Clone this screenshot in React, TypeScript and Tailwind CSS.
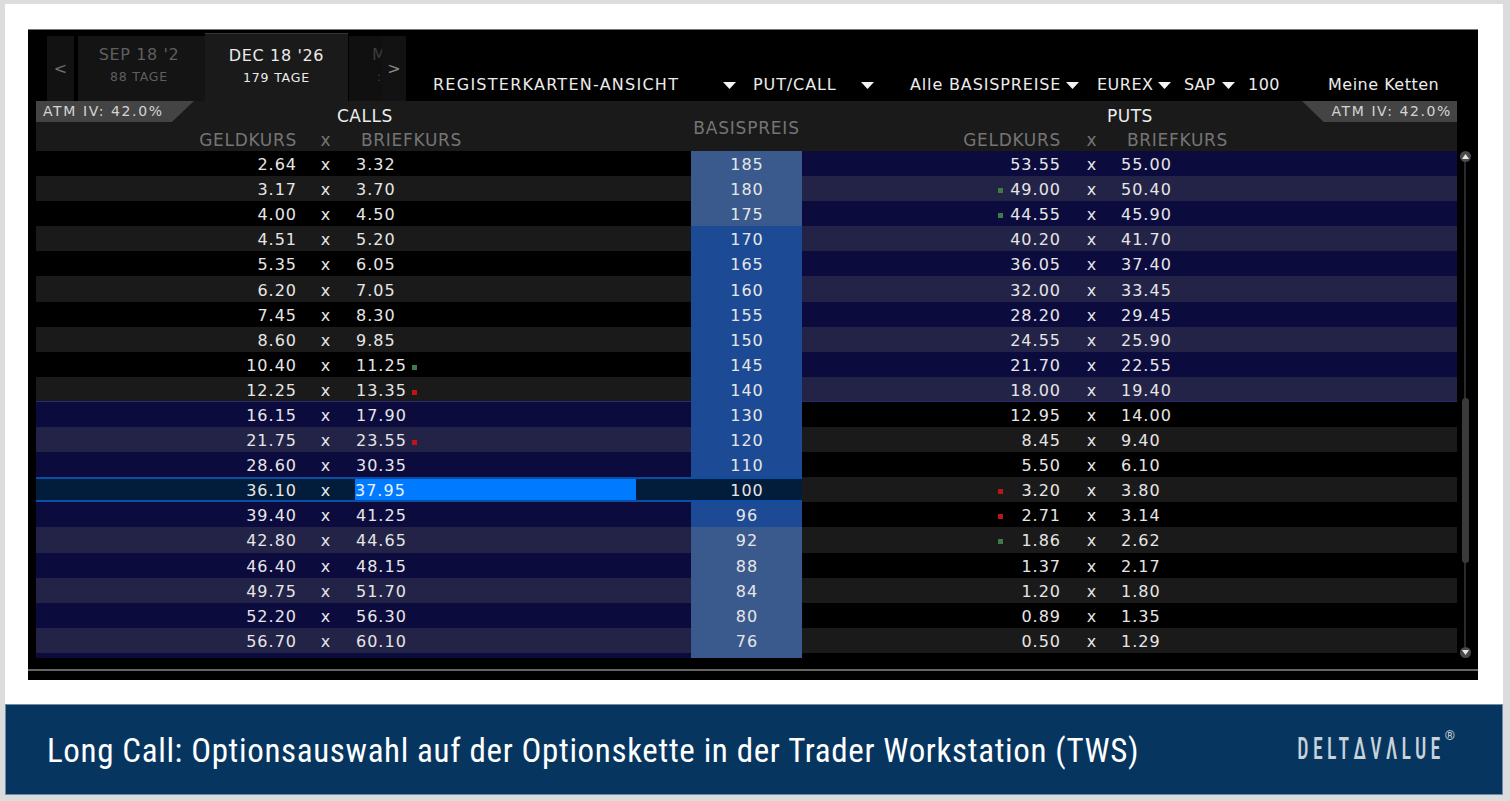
const rows: [string, string, string, string, string, string?, string?][] = [
  ["2.64", "3.32", "185", "53.55", "55.00"],
  ["3.17", "3.70", "180", "49.00", "50.40", "", "g"],
  ["4.00", "4.50", "175", "44.55", "45.90", "", "g"],
  ["4.51", "5.20", "170", "40.20", "41.70"],
  ["5.35", "6.05", "165", "36.05", "37.40"],
  ["6.20", "7.05", "160", "32.00", "33.45"],
  ["7.45", "8.30", "155", "28.20", "29.45"],
  ["8.60", "9.85", "150", "24.55", "25.90"],
  ["10.40", "11.25", "145", "21.70", "22.55", "g"],
  ["12.25", "13.35", "140", "18.00", "19.40", "r"],
  ["16.15", "17.90", "130", "12.95", "14.00"],
  ["21.75", "23.55", "120", "8.45", "9.40", "r"],
  ["28.60", "30.35", "110", "5.50", "6.10"],
  ["36.10", "37.95", "100", "3.20", "3.80", "", "r"],
  ["39.40", "41.25", "96", "2.71", "3.14", "", "r"],
  ["42.80", "44.65", "92", "1.86", "2.62", "", "g"],
  ["46.40", "48.15", "88", "1.37", "2.17"],
  ["49.75", "51.70", "84", "1.20", "1.80"],
  ["52.20", "56.30", "80", "0.89", "1.35"],
  ["56.70", "60.10", "76", "0.50", "1.29"],
];

function Dot({ c }: { c?: string }) {
  if (c === "g") return <span className="block w-[5px] h-[5px] mt-[3px] bg-[#3f7a48]" />;
  if (c === "r") return <span className="block w-[5px] h-[5px] mt-[3px] bg-[#c01414]" />;
  return <span className="block w-[5px] h-[5px]" />;
}

function Caret() {
  return (
    <svg width="13" height="7" viewBox="0 0 13 7" className="block">
      <path d="M0 0 H13 L6.5 7 Z" fill="#f4f4f4" />
    </svg>
  );
}

function CaretSlot({ w }: { w: string }) {
  return (
    <span className={`${w} shrink-0 h-[20px] flex items-center`}>
      <Caret />
    </span>
  );
}

function Row({ r, i }: { r: (typeof rows)[number]; i: number }) {
  const even = i % 2 === 0;
  const itm = i >= 10;
  const hl = i === 13;
  const lightStrike = i < 3 || i >= 15;
  const callBg = hl
    ? "bg-[#021c3b] border-y-2 border-[#0b4ea6]"
    : itm
      ? even
        ? "bg-[#0c0b3d]"
        : "bg-[#232247]"
      : even
        ? "bg-black"
        : "bg-[#1a1a1a]";
  const putBg = !itm
    ? even
      ? "bg-[#0c0b3d]"
      : "bg-[#232247]"
    : even
      ? "bg-black"
      : "bg-[#1a1a1a]";
  const strikeBg = hl
    ? "bg-[#021c3b] border-y-2 border-[#0b4ea6]"
    : lightStrike
      ? "bg-[#3a5a8e]"
      : "bg-[#1c4a94]";
  return (
    <div className="grid grid-cols-[655px_111px_655px] grid-rows-[25.1px] h-[25.1px] text-[#e6e6e6] text-[16px] leading-[20px] tracking-[1px]">
      <div className={`flex items-center min-w-0 min-h-0 ${callBg}`}>
        <span className="w-[261px] text-right pt-[3px]">{r[0]}</span>
        <span className="w-[56px] text-center pt-[3px] pl-[2px]">x</span>
        {hl ? (
          <span className="ml-[2px] w-[281px] h-full flex items-center pt-[3px] bg-[#007aff] text-[#e8f2ff]">{r[1]}</span>
        ) : (
          <span className="ml-[3px] pt-[3px] flex items-center gap-[5px]">
            {r[1]}
            <Dot c={r[5]} />
          </span>
        )}
      </div>
      <div className={`flex items-center justify-center pt-[3px] pl-[1px] min-h-0 ${strikeBg}`}>{r[2]}</div>
      <div className={`flex items-center min-h-0 ${putBg}`}>
        <span className="w-[196px] shrink-0" />
        <Dot c={r[6]} />
        <span className="w-[58px] text-right pt-[3px]">{r[3]}</span>
        <span className="w-[60px] text-center pt-[3px] pl-[2px]">x</span>
        <span className="pt-[3px]">{r[4]}</span>
      </div>
    </div>
  );
}

function ScrollKnob({ up }: { up: boolean }) {
  return (
    <span className="block w-[11px] h-[11px] rounded-full bg-[#4a4a4a] relative shrink-0">
      <svg width="7" height="5" viewBox="0 0 7 5" className="absolute left-[2px] top-[3px]">
        <path d={up ? "M3.5 0 L7 5 H0 Z" : "M0 0 H7 L3.5 5 Z"} fill="#e8e8e8" />
      </svg>
    </span>
  );
}

export default function App() {
  return (
    <div
      className="w-[1510px] h-[801px] bg-[#dcdcdc] pt-[4px] pl-[5px] pr-[7px] overflow-hidden"
      style={{ fontFamily: '"DejaVu Sans", Verdana, sans-serif' }}
    >
      <div className="bg-white h-[700px] pt-[25px] pl-[23px] pr-[25px]">
        <div className="w-[1450px] h-[651px] bg-black border-t border-[#777] flex flex-col">
          {/* top bar */}
          <div className="h-[71px] flex shrink-0">
            <div className="flex items-stretch pl-[19px] pt-[6px] w-[378px] shrink-0">
              <div className="w-[27px] bg-[#121212] flex items-center justify-center text-[#6e6e6e] text-[16px]">&lt;</div>
              <div className="ml-[4px] w-[127px] bg-[#141414] flex flex-col items-center pt-[8px] pr-[5px] text-[#5f5f5f] whitespace-nowrap">
                <span className="text-[16px] leading-[22px] tracking-[0.6px]">SEP 18 '2</span>
                <span className="text-[12.5px] leading-[22px] tracking-[0.8px]">88 TAGE</span>
              </div>
              <div className="w-[143px] -mt-[3px] bg-[#1a1a1a] border-t border-[#333] flex flex-col items-center pt-[11px] text-[#ececec] whitespace-nowrap">
                <span className="text-[16px] leading-[22px] tracking-[0.65px]">DEC 18 '26</span>
                <span className="text-[12.5px] leading-[22px] tracking-[0.8px]">179 TAGE</span>
              </div>
              <div className="w-[33px] ml-[1px] bg-[#101010] flex flex-col pl-[23px] pt-[8px] text-[#3d3d3d] overflow-hidden whitespace-nowrap">
                <span className="text-[16px] leading-[22px]">M</span>
                <span className="text-[12.5px] leading-[22px] pl-[5px]">:</span>
              </div>
              <div className="w-[24px] bg-[#121212] flex items-center justify-center text-[#8a8a8a] text-[16px]">&gt;</div>
            </div>
            <div className="flex-1 flex items-end pb-[6px] text-[16px] leading-[20px] text-[#ececec] whitespace-nowrap">
              <span className="ml-[27px] w-[290px] shrink-0 tracking-[1.25px]">REGISTERKARTEN-ANSICHT</span>
              <CaretSlot w="w-[30px]" />
              <span className="w-[108px] shrink-0 tracking-[0.9px]">PUT/CALL</span>
              <CaretSlot w="w-[49px]" />
              <span className="w-[156px] shrink-0 tracking-[0.85px]">Alle BASISPREISE</span>
              <CaretSlot w="w-[31px]" />
              <span className="w-[61px] shrink-0 tracking-[0.5px]">EUREX</span>
              <CaretSlot w="w-[26px]" />
              <span className="w-[38px] shrink-0">SAP</span>
              <CaretSlot w="w-[26px]" />
              <span className="w-[80px] shrink-0 tracking-[0.5px]">100</span>
              <span className="tracking-[0.5px]">Meine Ketten</span>
            </div>
          </div>
          {/* table */}
          <div className="flex flex-1 min-h-0 pl-[8px]">
            <div className="w-[1421px] shrink-0">
              <div className="h-[50px] bg-[#1a1a1a] grid grid-cols-[655px_111px_655px] whitespace-nowrap">
                <div className="relative text-[#757575]">
                  <div className="absolute left-0 top-0 w-[158px] h-[21px] bg-[#444] pl-[7px] text-[14px] leading-[20px] text-[#d4d4d4] tracking-[1.6px] [clip-path:polygon(0_0,100%_0,86%_100%,0_100%)]">
                    ATM IV: 42.0%
                  </div>
                  <div className="pl-[301px] pt-[4px] text-[17px] leading-[22px] tracking-[0.5px] text-[#ececec]">CALLS</div>
                  <div className="flex text-[17px] leading-[27px] tracking-[0.7px]">
                    <span className="w-[261px] text-right">GELDKURS</span>
                    <span className="w-[56px] text-center pl-[2px]">x</span>
                    <span className="ml-[8px]">BRIEFKURS</span>
                  </div>
                </div>
                <div className="flex items-center justify-center text-[17px] tracking-[0.8px] text-[#757575] pt-[2px]">BASISPREIS</div>
                <div className="relative text-[#757575]">
                  <div className="absolute right-0 top-0 w-[155px] h-[21px] bg-[#444] pr-[5px] text-right text-[14px] leading-[20px] text-[#d4d4d4] tracking-[1.6px] [clip-path:polygon(0_0,100%_0,100%_100%,14%_100%)]">
                    ATM IV: 42.0%
                  </div>
                  <div className="pl-[305px] pt-[4px] text-[17px] leading-[22px] tracking-[0.5px] text-[#ececec]">PUTS</div>
                  <div className="flex text-[17px] leading-[27px] tracking-[0.7px]">
                    <span className="w-[259px] text-right">GELDKURS</span>
                    <span className="w-[60px] text-center pl-[2px]">x</span>
                    <span className="ml-[6px]">BRIEFKURS</span>
                  </div>
                </div>
              </div>
              <div className="relative">
                {rows.map((r, i) => (
                  <Row key={r[2]} r={r} i={i} />
                ))}
                <div className="absolute left-0 w-[655px] top-[250px] h-px bg-[#2a2a6e]" />
                <div className="absolute left-[766px] w-[655px] top-[250px] h-px bg-[#2a2a6e]" />
              </div>
              <div className="grid grid-cols-[655px_111px_655px] h-[5px]">
                <div className="bg-[#0c0b3d]" />
                <div className="bg-[#3a5a8e]" />
                <div className="bg-black" />
              </div>
            </div>
            <div className="w-[21px] shrink-0 flex flex-col items-center pr-[5px] pt-[50px]">
              <div className="h-[507px] flex flex-col items-center relative">
                <ScrollKnob up />
                <div className="flex-1 w-[2px] bg-[#2a2a2a]" />
                <ScrollKnob up={false} />
                <div className="absolute left-[2px] top-[247px] w-[7px] h-[165px] rounded-full bg-[#3a3a3a]" />
              </div>
            </div>
          </div>
          <div className="shrink-0 h-[11px] border-t-2 border-[#666] bg-black" />
        </div>
      </div>
      <div className="h-[91px] bg-[#06365f] border border-[#6f8ea6] flex items-center justify-between pl-[41px] pr-[47px] pt-[2px]">
        <span
          className="text-white text-[33px] tracking-[0.65px] whitespace-nowrap font-stretch-condensed"
          style={{ fontFamily: "Roboto, sans-serif" }}
        >
          Long Call: Optionsauswahl auf der Optionskette in der Trader Workstation (TWS)
        </span>
        <span
          className="flex items-start text-[#c9d2da] whitespace-nowrap mb-[5px]"
          style={{ fontFamily: "Roboto, sans-serif" }}
        >
          <span className="text-[32px] leading-[38px] tracking-[7px] font-medium font-stretch-condensed origin-right scale-x-[0.62]">
            DELTΔVΛLUE
          </span>
          <span className="text-[13px] leading-[16px] -mt-[1px]">®</span>
        </span>
      </div>
    </div>
  );
}
